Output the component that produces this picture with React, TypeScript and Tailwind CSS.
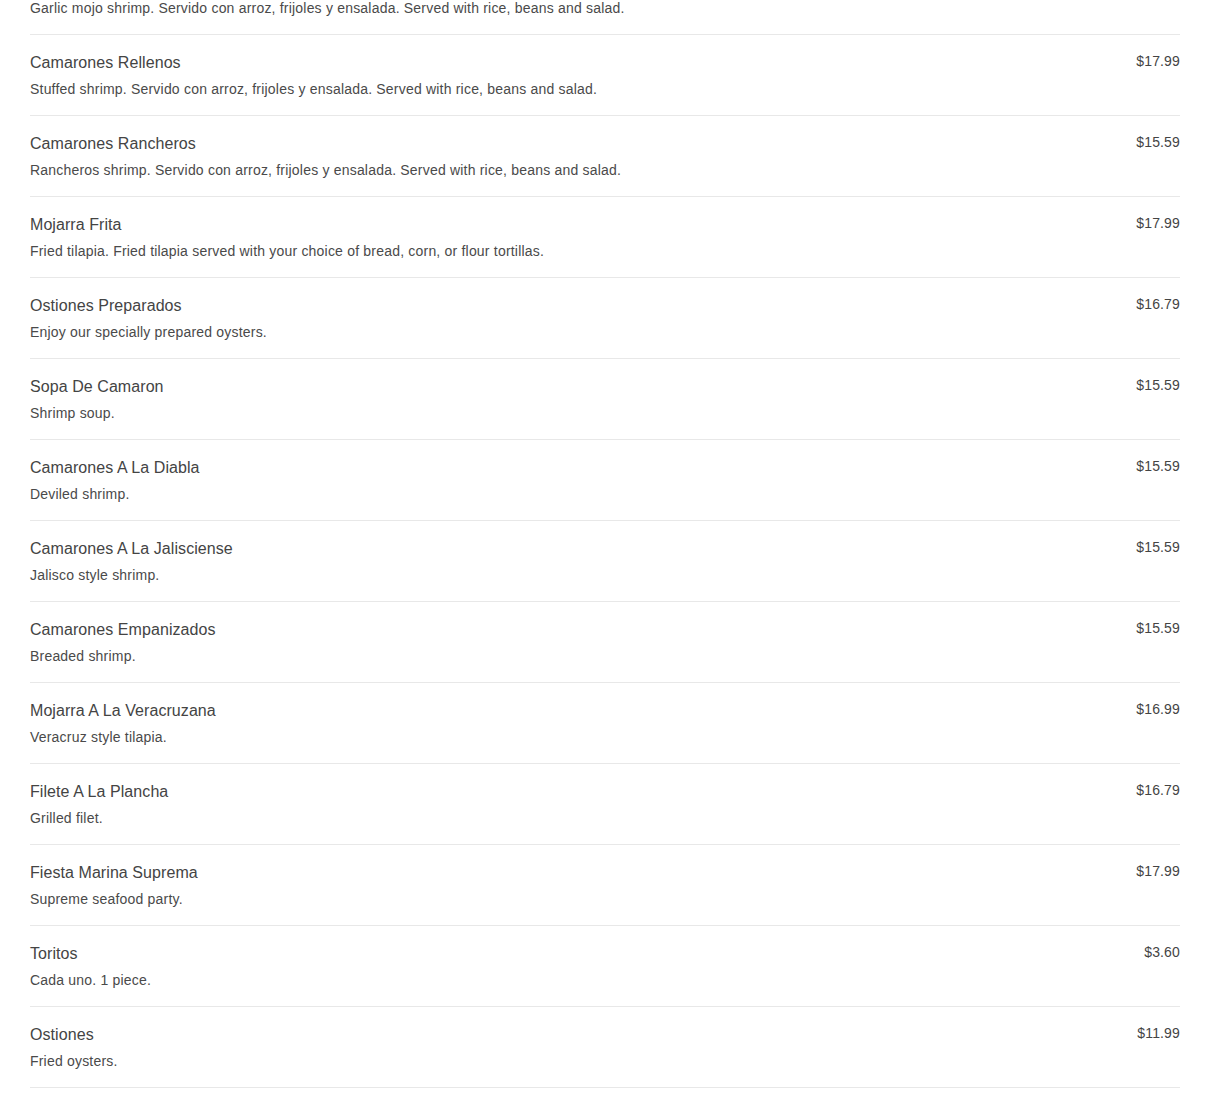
const items = [
  { name: 'Camarones Al Mojo De Ajo', desc: 'Garlic mojo shrimp. Servido con arroz, frijoles y ensalada. Served with rice, beans and salad.', price: '$15.59' },
  { name: 'Camarones Rellenos', desc: 'Stuffed shrimp. Servido con arroz, frijoles y ensalada. Served with rice, beans and salad.', price: '$17.99' },
  { name: 'Camarones Rancheros', desc: 'Rancheros shrimp. Servido con arroz, frijoles y ensalada. Served with rice, beans and salad.', price: '$15.59' },
  { name: 'Mojarra Frita', desc: 'Fried tilapia. Fried tilapia served with your choice of bread, corn, or flour tortillas.', price: '$17.99' },
  { name: 'Ostiones Preparados', desc: 'Enjoy our specially prepared oysters.', price: '$16.79' },
  { name: 'Sopa De Camaron', desc: 'Shrimp soup.', price: '$15.59' },
  { name: 'Camarones A La Diabla', desc: 'Deviled shrimp.', price: '$15.59' },
  { name: 'Camarones A La Jalisciense', desc: 'Jalisco style shrimp.', price: '$15.59' },
  { name: 'Camarones Empanizados', desc: 'Breaded shrimp.', price: '$15.59' },
  { name: 'Mojarra A La Veracruzana', desc: 'Veracruz style tilapia.', price: '$16.99' },
  { name: 'Filete A La Plancha', desc: 'Grilled filet.', price: '$16.79' },
  { name: 'Fiesta Marina Suprema', desc: 'Supreme seafood party.', price: '$17.99' },
  { name: 'Toritos', desc: 'Cada uno. 1 piece.', price: '$3.60' },
  { name: 'Ostiones', desc: 'Fried oysters.', price: '$11.99' },
];

export default function App() {
  return (
    <div className="min-h-screen overflow-hidden bg-white [font-family:'Liberation_Sans',Arial,sans-serif] text-[#444]">
      {/* list is scrolled: first row sits partly above the fold */}
      <ul className="mt-[-46px] px-[30px]">
        {items.map((item) => (
          <li key={item.name} className="flex justify-between gap-6 border-b border-[#e8e8e8] pt-4 pb-4">
            <div>
              <h3 className="text-base leading-6 tracking-[0.07px] text-[#444]">{item.name}</h3>
              <p className="mt-1 text-sm leading-5 tracking-[0.2px] text-[#4a4a4a]">{item.desc}</p>
            </div>
            <span className="text-sm leading-5 tracking-[0.15px] text-[#444]">{item.price}</span>
          </li>
        ))}
      </ul>
    </div>
  );
}
